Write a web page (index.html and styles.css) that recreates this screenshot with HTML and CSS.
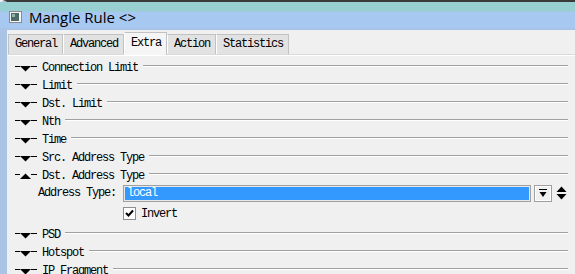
FILE: index.html
```html
<!DOCTYPE html>
<html lang="en">
<head>
    <meta charset="UTF-8">
    <title>Mangle Rule</title>
    <link rel="stylesheet" href="styles.css">
</head>
<body>

    <div class="window">
        <!-- Barre de titre -->
        <div class="titlebar">
            <svg class="app-icon" width="13" height="12" viewBox="0 0 13 12">
                <rect x="0.5" y="0.5" width="12" height="11" fill="#f4f4f4" stroke="#8a8a8a"/>
                <rect x="2" y="2" width="8" height="8" fill="#4e6a66"/>
                <rect x="3" y="3" width="3" height="3" fill="#8fb2aa"/>
                <rect x="11" y="1" width="1" height="5" fill="#ffffff"/>
            </svg>
            <span class="title">Mangle Rule &lt;&gt;</span>
        </div>

        <div class="content">
            <!-- Onglets -->
            <div class="tabs">
                <div class="tab">General</div>
                <div class="tab">Advanced</div>
                <div class="tab active">Extra</div>
                <div class="tab">Action</div>
                <div class="tab">Statistics</div>
            </div>

            <!-- Sections -->
            <div class="sections">
                <div class="section">
                    <svg class="toggle" width="22" height="8" viewBox="0 0 22 8"><path d="M0 1.5H5M16 1.5H22" stroke="#000"/><path d="M5 1H16L10.5 6.5Z" fill="#000"/></svg>
                    <span class="label">Connection Limit</span><span class="rule"></span>
                </div>
                <div class="section">
                    <svg class="toggle" width="22" height="8" viewBox="0 0 22 8"><path d="M0 1.5H5M16 1.5H22" stroke="#000"/><path d="M5 1H16L10.5 6.5Z" fill="#000"/></svg>
                    <span class="label">Limit</span><span class="rule"></span>
                </div>
                <div class="section">
                    <svg class="toggle" width="22" height="8" viewBox="0 0 22 8"><path d="M0 1.5H5M16 1.5H22" stroke="#000"/><path d="M5 1H16L10.5 6.5Z" fill="#000"/></svg>
                    <span class="label">Dst. Limit</span><span class="rule"></span>
                </div>
                <div class="section">
                    <svg class="toggle" width="22" height="8" viewBox="0 0 22 8"><path d="M0 1.5H5M16 1.5H22" stroke="#000"/><path d="M5 1H16L10.5 6.5Z" fill="#000"/></svg>
                    <span class="label">Nth</span><span class="rule"></span>
                </div>
                <div class="section">
                    <svg class="toggle" width="22" height="8" viewBox="0 0 22 8"><path d="M0 1.5H5M16 1.5H22" stroke="#000"/><path d="M5 1H16L10.5 6.5Z" fill="#000"/></svg>
                    <span class="label">Time</span><span class="rule"></span>
                </div>
                <div class="section">
                    <svg class="toggle" width="22" height="8" viewBox="0 0 22 8"><path d="M0 1.5H5M16 1.5H22" stroke="#000"/><path d="M5 1H16L10.5 6.5Z" fill="#000"/></svg>
                    <span class="label">Src. Address Type</span><span class="rule"></span>
                </div>
                <div class="section">
                    <svg class="toggle" width="22" height="8" viewBox="0 0 22 8"><path d="M0 1.5H5M16 1.5H22" stroke="#000"/><path d="M5 6H16L10.5 0.5Z" fill="#000"/></svg>
                    <span class="label">Dst. Address Type</span><span class="rule"></span>
                </div>

                <!-- Champ ouvert -->
                <div class="field">
                    <span class="field-label">Address Type:</span>
                    <div class="input"><span class="selected">local</span></div>
                    <div class="drop-btn">
                        <svg width="8" height="9" viewBox="0 0 8 9"><path d="M0 0.5H8" stroke="#000"/><path d="M0.5 3H7.5L4 8Z" fill="#000"/></svg>
                    </div>
                    <svg class="updown" width="11" height="14" viewBox="0 0 11 14"><path d="M0.5 6L5.5 0.5L10.5 6Z" fill="#000"/><path d="M0.5 8L5.5 13.5L10.5 8Z" fill="#000"/></svg>
                </div>
                <div class="check-row">
                    <span class="checkbox">
                        <svg width="11" height="11" viewBox="0 0 11 11"><path d="M2 5L4.5 7.5L9 2.5" stroke="#000" stroke-width="2" fill="none"/></svg>
                    </span>
                    <span>Invert</span>
                </div>

                <div class="section">
                    <svg class="toggle" width="22" height="8" viewBox="0 0 22 8"><path d="M0 1.5H5M16 1.5H22" stroke="#000"/><path d="M5 1H16L10.5 6.5Z" fill="#000"/></svg>
                    <span class="label">PSD</span><span class="rule"></span>
                </div>
                <div class="section">
                    <svg class="toggle" width="22" height="8" viewBox="0 0 22 8"><path d="M0 1.5H5M16 1.5H22" stroke="#000"/><path d="M5 1H16L10.5 6.5Z" fill="#000"/></svg>
                    <span class="label">Hotspot</span><span class="rule"></span>
                </div>
                <div class="section">
                    <svg class="toggle" width="22" height="8" viewBox="0 0 22 8"><path d="M0 1.5H5M16 1.5H22" stroke="#000"/><path d="M5 1H16L10.5 6.5Z" fill="#000"/></svg>
                    <span class="label">IP Fragment</span><span class="rule"></span>
                </div>
            </div>
        </div>
    </div>

</body>
</html>
```

FILE: styles.css
```css
/* Page */
body {
    margin: 0;
    background-color: #f0f0f0;
    overflow: hidden;
}

.window {
    height: 274px;
    border-top: 2px solid #3a3a3a;
    border-left: 7px solid #aac4e6;
    border-top-left-radius: 6px;
    background-color: #f0f0f0;
}

/* Barre de titre */
.titlebar {
    height: 28px;
    margin-left: -7px;
    padding-left: 9px;
    display: flex;
    align-items: center;
    gap: 7px;
    background: linear-gradient(to bottom, #98cfd0 0px, #98cfd0 9px, #a7c8f0 10px, #a7c8f0 25px, #a9c0e2 28px);
}

.app-icon {
    margin-top: 1px;
}

.title {
    font-family: "Open Sans", "Liberation Sans", sans-serif;
    font-size: 15px;
    color: #000;
    margin-top: 1px;
}

/* Onglets */
.content {
    font-family: "Liberation Mono", monospace;
    font-size: 12px;
    letter-spacing: -1.2px;
    color: #000;
}

.tabs {
    display: flex;
    align-items: flex-end;
    height: 24px;
    margin-left: 1px;
    border-bottom: 1px solid #dadada;
    box-shadow: 0 1px 0 #ffffff;
}

.tab {
    height: 19px;
    line-height: 19px;
    padding: 0 5px 0 6px;
    background-color: #e2e2e2;
    border: 1px solid #c2c2c2;
    border-bottom: none;
    border-left-color: #ffffff;
}

.tab:first-child {
    border-left-color: #c2c2c2;
}

.tab.active {
    height: 22px;
    line-height: 21px;
    background-color: #f5f5f5;
    margin-bottom: -1px;
}

/* Sections */
.sections {
    padding-top: 3px;
    padding-right: 7px;
}

.section {
    display: flex;
    align-items: center;
    height: 18px;
    padding-left: 8px;
}

.toggle {
    margin-right: 5px;
    margin-top: 4px;
}

.label {
    white-space: nowrap;
    margin-top: 1px;
}

.rule {
    flex: 1;
    height: 0;
    margin-left: 5px;
    margin-top: -3px;
    border-top: 1px solid #a0a0a0;
    border-bottom: 1px solid #ffffff;
}

/* Champ Address Type */
.field {
    display: flex;
    align-items: center;
    height: 18px;
    padding-left: 31px;
}

.field-label {
    width: 85px;
    white-space: nowrap;
}

.input {
    width: 403px;
    height: 15px;
    border: 1px solid #a0a0a0;
    box-shadow: inset 0 0 0 1px #e8e8e8;
    background-color: #3399ff;
    padding-left: 3px;
    line-height: 15px;
}

.selected {
    color: #ffffff;
}

.drop-btn {
    width: 16px;
    height: 15px;
    margin-left: 3px;
    border: 1px solid #a0a0a0;
    box-shadow: inset 0 0 0 1px #ffffff;
    background-color: #f0f0f0;
    display: flex;
    align-items: center;
    justify-content: center;
}

.updown {
    margin-left: 4px;
}

.check-row {
    display: flex;
    align-items: center;
    gap: 5px;
    height: 23px;
    padding-left: 116px;
}

.checkbox {
    width: 11px;
    height: 11px;
    border: 1px solid #8e8f8f;
    background-color: #ffffff;
    display: flex;
}
```
